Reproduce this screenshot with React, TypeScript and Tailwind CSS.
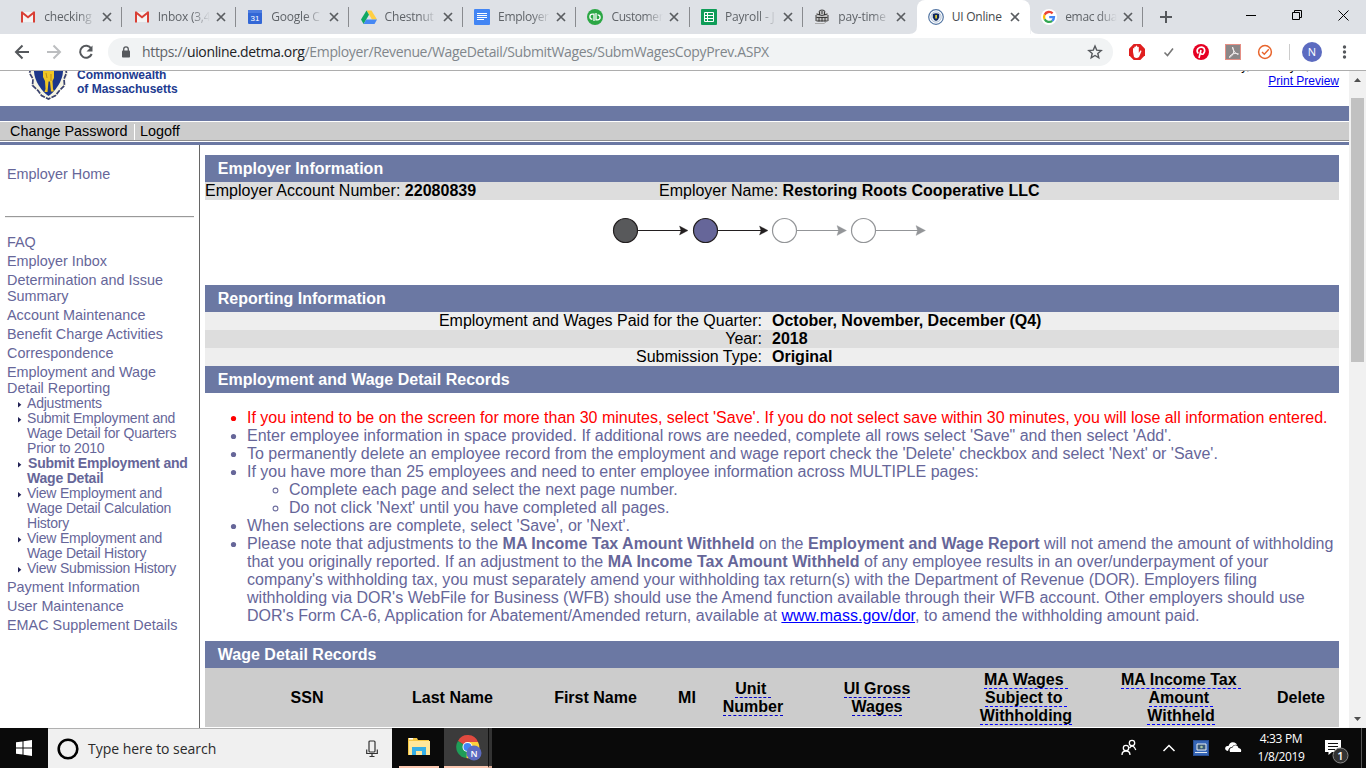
import React from "react";

const arial = "font-['Liberation_Sans',Arial,sans-serif]";
const ui = "font-['Open_Sans','Noto_Sans',sans-serif]";

function Gmail() {
  return (
    <svg width="16" height="16" viewBox="0 0 16 16">
      <path d="M2 3h12v10H2z" fill="#f3f3f3" />
      <path d="M1 13.5V3.2Q1 2.3 2.1 2.3L8 7l5.900-4.700q1.100 0 1.100.9v10.300h-2V5.600L8 9.600 3 5.600v7.900z" fill="#d93f35" />
    </svg>
  );
}
function Calendar() {
  return (
    <svg width="16" height="16" viewBox="0 0 16 16">
      <rect x="1" y="1" width="14" height="14" rx="1" fill="#3367d6" />
      <rect x="1" y="1" width="14" height="3" fill="#4e7de0" />
      <text x="8" y="11.7" fontSize="8" textAnchor="middle" fill="#fff" fontFamily="Liberation Sans">31</text>
    </svg>
  );
}
function Drive() {
  return (
    <svg width="16" height="16" viewBox="0 0 16 16">
      <path d="M5.5 1.5h5L16 10.5h-5z" fill="#ffcf43" />
      <path d="M5.5 1.5L0 10.5 2.6 15 8 5.8z" fill="#11a861" />
      <path d="M5.2 10.5H16L13.5 15H2.6z" fill="#4688f4" />
    </svg>
  );
}
function Docs() {
  return (
    <svg width="16" height="16" viewBox="0 0 16 16">
      <rect width="16" height="16" rx="1" fill="#4285f4" />
      <path d="M3 4.5h10M3 6.5h10M3 8.5h10M3 10.5h7" stroke="#fff" />
    </svg>
  );
}
function QuickBooks() {
  return (
    <svg width="16" height="16" viewBox="0 0 16 16">
      <circle cx="8" cy="8" r="8" fill="#2ca745" />
      <path d="M7 12V5.200H5.400a2.500 2.500 0 0 0 0 5M9 4v6.800h1.600a2.500 2.500 0 0 0 0-5" fill="none" stroke="#fff" strokeWidth="1.300" />
    </svg>
  );
}
function Sheets() {
  return (
    <svg width="16" height="16" viewBox="0 0 16 16">
      <rect width="16" height="16" rx="1" fill="#0f9d58" />
      <path d="M3.500 3.500h9v9h-9zM3.500 6.500h9M3.500 9.500h9M6.500 3.500v9" fill="none" stroke="#fff" />
    </svg>
  );
}
function Statehouse() {
  return (
    <svg width="16" height="16" viewBox="0 0 16 16">
      <path d="M2 6q0-2 3-3 0-2 3-2t3 2q3 1 3 3v6H2z" fill="#c4c4c4" />
      <path d="M5 3q0-2 3-2t3 2M2.500 5q5.500 3 11 0M2 12V6M14 12V6M5.500 3v3M10.500 3v3M8 2v3M2.500 8.500h11M5 9v3.500M8 8v4.500M11 9v3.500M2.500 12h11" stroke="#2b2b2b" fill="none" strokeWidth=".9" />
      <path d="M1 14.500h9l2-1.500" stroke="#aaa" fill="none" />
    </svg>
  );
}
function SealSmall() {
  return (
    <svg width="16" height="16" viewBox="0 0 16 16">
      <circle cx="8" cy="8" r="7.300" fill="#fff" stroke="#5577a4" strokeWidth="1.200" />
      <circle cx="8" cy="8" r="5.200" fill="#e8eef4" stroke="#9fb2ca" strokeWidth=".7" />
      <path d="M4.800 5Q8 3.500 11.200 5v3.500Q10.500 11 8 12 5.500 11 4.800 8.500z" fill="#10285e" />
      <path d="M7.200 6h1.800v3.500H7.200z" fill="#d9c62e" />
    </svg>
  );
}
function Google() {
  return (
    <svg width="16" height="16" viewBox="0 0 16 16">
      <circle cx="8" cy="8" r="8" fill="#fff" />
      <g fill="none" strokeWidth="2.300">
        <path d="M11.600 4.400A5 5 0 0 0 3.600 5.700" stroke="#ea4335" />
        <path d="M3.600 5.700a5 5 0 0 0 0 4.600" stroke="#fbbc05" />
        <path d="M3.600 10.300A5 5 0 0 0 11.200 11.800" stroke="#34a853" />
        <path d="M11.200 11.800A4.600 4.600 0 0 0 13 8.100H8.200" stroke="#4285f4" />
      </g>
    </svg>
  );
}
function Cross() {
  return (
    <svg width="10" height="10" viewBox="0 0 10 10">
      <path d="M1 1l8 8M9 1L1 9" stroke="#5a5d61" strokeWidth="1.700" />
    </svg>
  );
}

const tabs: { icon: React.ReactNode; label: string; track: string; active?: boolean }[] = [
  { icon: <Gmail />, label: "checking", track: "tracking-[-0.2px]" },
  { icon: <Gmail />, label: "Inbox (3,4", track: "tracking-[-0.25px]" },
  { icon: <Calendar />, label: "Google C", track: "tracking-[-0.2px]" },
  { icon: <Drive />, label: "Chestnut", track: "tracking-[-0.2px]" },
  { icon: <Docs />, label: "Employer", track: "tracking-[-0.3px]" },
  { icon: <QuickBooks />, label: "Customer", track: "tracking-[-0.4px]" },
  { icon: <Sheets />, label: "Payroll - J", track: "tracking-[-0.15px]" },
  { icon: <Statehouse />, label: "pay-time", track: "tracking-[-0.2px]" },
  { icon: <SealSmall />, label: "UI Online", track: "tracking-[-0.25px]", active: true },
  { icon: <Google />, label: "emac dua", track: "tracking-[-0.35px]" },
];

function TabStrip() {
  return (
    <div className="flex h-[34px] bg-[#dee1e6] pl-[9px]">
      {tabs.map((t, i) => (
        <div key={t.label} className={`relative flex h-[34px] w-[113.450px] shrink-0 items-center pl-[11.300px] ${t.active ? "rounded-t-lg bg-white" : ""}`}>
          {t.active && (
            <svg className="absolute bottom-0 -left-2" width="130" height="8" viewBox="0 0 130 8">
              <path d="M0 8Q8 8 8 0V8zM121.400 0Q121.400 8 129.400 8h-8z" fill="#fff" />
            </svg>
          )}
          <span className="flex w-4 shrink-0">{t.icon}</span>
          <span className={`relative ml-[8px] w-[52px] overflow-hidden text-[12px] leading-[18px] whitespace-nowrap ${t.track} ${t.active ? "text-[#45494d]" : "text-[#5f6368] [mask-image:linear-gradient(to_right,#000_65%,transparent)]"}`}>{t.label}</span>
          <span className="ml-[6px] flex"><Cross /></span>
          {i !== 7 && !t.active && <span className="absolute top-[7px] right-0 h-5 w-px bg-[#898b8f]" />}
        </div>
      ))}
      <div className="flex w-[45px] items-center justify-center">
        <svg width="12" height="12" viewBox="0 0 12 12"><path d="M6 0v12M0 6h12" stroke="#55585c" strokeWidth="2" /></svg>
      </div>
      <div className="ml-[57.500px] flex h-[29px] items-center">
        <svg width="110" height="14" viewBox="0 0 110 14" fill="none" stroke="#000">
          <path d="M0 7.500h10M46.500 4.500h7v7h-7zM48.500 4v-1.500h7v7h-1.500M92.500 2.500l10 10M102.500 2.500l-10 10" />
        </svg>
      </div>
    </div>
  );
}

function Toolbar() {
  return (
    <div className="flex h-[37px] items-center border-b border-[#adadad] bg-white">
      <svg width="108" height="36" viewBox="0 0 108 36" fill="none" strokeWidth="2">
        <path d="M29 18H16.500M22.500 11.500L16 18l6.500 6.500" stroke="#55585c" />
        <path d="M47 18h12.500M53.500 11.500L60 18l-6.500 6.500" stroke="#bcbec0" />
        <path d="M91.200 14.500A6 6 0 1 0 91.700 20" stroke="#55585c" />
        <path d="M92.500 11.500v6h-6z" fill="#55585c" />
      </svg>
      <div className="flex h-7 w-[1005px] items-center rounded-full bg-[#f1f3f4] pl-[13px]">
        <svg width="10" height="12" viewBox="0 0 10 12">
          <rect x="1" y="4.500" width="8" height="7" rx=".8" fill="#55585c" />
          <path d="M2.700 5V3.200a2.300 2.300 0 0 1 4.600 0V5" fill="none" stroke="#55585c" strokeWidth="1.300" />
        </svg>
        <span className="ml-[11px] w-[940px] text-[14px] leading-5 tracking-[-0.350px] whitespace-nowrap text-[#80868b]">
          <span className="text-[#5f6368]">https://</span><span className="text-[#202124]">uionline.detma.org</span>/Employer/Revenue/WageDetail/SubmitWages/SubmWagesCopyPrev.ASPX
        </span>
        <svg width="16" height="16" viewBox="0 0 16 16" className="ml-[5px] shrink-0">
          <path d="M8 2l1.700 4.100 4.500.4-3.400 2.900 1 4.400L8 11.500l-3.800 2.300 1-4.400-3.400-2.900 4.500-.4z" fill="none" stroke="#55585c" strokeWidth="1.400" />
        </svg>
      </div>
      <svg width="253" height="36" viewBox="1113 34 253 36">
        <path d="M1133.700 44h6.600l4.700 4.700v6.600l-4.700 4.700h-6.600l-4.700-4.700v-6.600z" fill="#e01f1f" />
        <path d="M1133 52v-3.500q.8-1 1.300 0V47q.9-1.200 1.500 0v-.8q.9-1.200 1.500 0v1q1-1.100 1.500 0V53l1.500-2.400q1.600-.2 1 1.200l-2.300 5.200q-2.500 2-5 0z" fill="#fff" />
        <path d="M1164.500 52.500l3 3 5.500-7" fill="none" stroke="#777" strokeWidth="1.600" />
        <circle cx="1201" cy="52" r="8" fill="#e60023" />
        <path d="M1201 50l-2 8M1198.300 53.500q-2.300-2.500-.3-5 3-2.500 6-.3 1.700 3-.7 5.700-2 .9-2.800-.8" fill="none" stroke="#fff" strokeWidth="1.600" />
        <rect x="1225.500" y="44.500" width="15" height="15" fill="#8b8788" stroke="#e58f85" />
        <path d="M1232.500 47q2 4 1 6-2 4-4 4.500-1-1 3-3.500 4-1.500 6 0 0 1.500-3-1-3-3-3-6" fill="none" stroke="#f3eeee" />
        <circle cx="1265" cy="52" r="6.400" fill="none" stroke="#e8642c" strokeWidth="1.500" />
        <path d="M1262 52l2.300 2.300 4.500-5" fill="none" stroke="#e8642c" strokeWidth="1.400" />
        <path d="M1289.500 44v16" stroke="#ccc" />
        <circle cx="1312" cy="52" r="10" fill="#5c6bc0" />
        <text x="1312" y="56" fontSize="11" textAnchor="middle" fill="#fff" fontFamily="Open Sans">N</text>
        <g fill="#55585c"><circle cx="1344.500" cy="47" r="1.700" /><circle cx="1344.500" cy="52" r="1.700" /><circle cx="1344.500" cy="57" r="1.700" /></g>
      </svg>
    </div>
  );
}

function SiteHeader() {
  return (
    <>
      <div className="flex h-[35px] justify-between overflow-hidden">
        <div className="flex">
          <svg width="77" height="35" viewBox="0 71 77 35">
            <path d="M30 66L29 73l3 6v7l5 5 3.500 5 8 4 8-4 3.500-5 5.500-5V80l2.500-6-1.500-8z" fill="#f6f4e3" />
            <path d="M31 68l-1.500 5 3.500 6-.5 6.500 5.500 5 3.500 5 7 3.500 7-3.500 4-5 5-5-.5-6.500 2.500-6-1-5" fill="none" stroke="#3a4270" strokeWidth="1.700" strokeDasharray="5 1.200" />
            <path d="M34 66h29q1 10-4.500 19-5 8-10 11-5-3-10-11Q33 76 34 66z" fill="#1d3789" />
            <path d="M43 71h11v7l-1.500 3 .5 8 1 2.500h-3l-1-10h-1.500l-1 10.500h-3l1-3-.5-8-2-4z" fill="#f2c624" />
            <path d="M46 73l1 5M51 74v7" stroke="#bd8b1b" />
          </svg>
          <div className="-mt-[3px] text-[12px] leading-[14px] font-bold text-[#213a8f]">Commonwealth<br />of Massachusetts</div>
        </div>
        <div className="-mt-[12px] mr-[10px] text-right text-[12px] leading-[15px]">
          <div>Tuesday, January 8, 2019</div>
          <a className="text-[#0000ee] underline">Print Preview</a>
        </div>
      </div>
      <div className="h-[15px] bg-[#6b78a3]" />
      <div className="mt-px flex h-[19px] items-center border-b border-[#8e8e8e] bg-[#ccc] pt-px pl-[10px] text-[14.400px]">
        <span>Change Password</span>
        <span className="mr-[5.500px] ml-[6px] h-4 w-px bg-white" />
        <span>Logoff</span>
      </div>
      <div className="mt-px h-[3px] bg-[#6b78a3]" />
    </>
  );
}

const subItems: { lines: string[]; bold?: boolean }[] = [
  { lines: ["Adjustments"] },
  { lines: ["Submit Employment and", "Wage Detail for Quarters", "Prior to 2010"] },
  { lines: ["Submit Employment and", "Wage Detail"], bold: true },
  { lines: ["View Employment and", "Wage Detail Calculation", "History"] },
  { lines: ["View Employment and", "Wage Detail History"] },
  { lines: ["View Submission History"] },
];

function Sidebar() {
  return (
    <nav className="h-[583px] w-[200px] shrink-0 border-r border-[#666] pt-[21px] pl-[7px] text-[14.400px] leading-4 whitespace-nowrap text-[#666699]">
      <div>Employer Home</div>
      <div className="mt-[34px] mr-[5px] -ml-[2px] h-[2px] border-t border-b border-t-[#999] border-b-[#eee]" />
      <div className="mt-4 flex flex-col gap-[3px]">
        <div>FAQ</div>
        <div>Employer Inbox</div>
        <div>Determination and Issue<br />Summary</div>
        <div>Account Maintenance</div>
        <div>Benefit Charge Activities</div>
        <div>Correspondence</div>
        <div>
          Employment and Wage<br />Detail Reporting
          <ul className="text-[14px] leading-[15px] tracking-[-0.210px]">
            {subItems.map((s, i) => (
              <li key={i} className={`flex ${s.bold ? "font-bold" : ""}`}>
                <svg width="20" height="15" viewBox="0 0 20 15"><path d="M11 6v5.500l3.300-2.750z" fill="#222255" /></svg>
                <span>{s.lines.map((l, j) => <span key={l} className={`block ${s.bold && j === 0 ? "pl-px" : ""}`}>{l}</span>)}</span>
              </li>
            ))}
          </ul>
        </div>
        <div>Payment Information</div>
        <div>User Maintenance</div>
        <div>EMAC Supplement Details</div>
      </div>
    </nav>
  );
}

function Heading({ children }: { children: React.ReactNode }) {
  return <h2 className="h-[27px] bg-[#6b78a3] pl-[12.800px] text-[16px] leading-[27px] font-bold text-white">{children}</h2>;
}

function Steps() {
  return (
    <svg className="mt-[17px] ml-[407px]" width="316" height="28" viewBox="612 217 316 28" strokeWidth="1.200">
      <g stroke="#231f20">
        <circle cx="625.500" cy="230.500" r="12" fill="#58595b" />
        <path d="M638 230.500h44M718 230.500h44" />
        <path d="M679.500 226l8.500 4.500-8.500 4.500 1.500-4.500zM759.500 226l8.500 4.500-8.500 4.500 1.500-4.500z" fill="#231f20" strokeWidth=".3" />
        <circle cx="705.500" cy="230.500" r="12" fill="#666699" />
      </g>
      <g stroke="#939598">
        <circle cx="784.500" cy="230.500" r="12" fill="#fff" />
        <circle cx="863.500" cy="230.500" r="12" fill="#fff" />
        <path d="M797 230.500h44M876 230.500h44" />
        <path d="M837 225.500l9.500 5-9.500 5 1.500-5zM916 225.500l9.500 5-9.500 5 1.500-5z" fill="#939598" strokeWidth=".3" />
      </g>
    </svg>
  );
}

function Item({ red, children }: { red?: boolean; children: React.ReactNode }) {
  return (
    <li className={`flex pl-[22px] ${red ? "text-[#ff0000]" : ""}`}>
      <svg className="shrink-0" width="20" height="18" viewBox="0 0 20 18"><circle cx="6.500" cy="9.500" r="2.600" fill={red ? "#f00" : "#666699"} /></svg>
      <div>{children}</div>
    </li>
  );
}
function SubItem({ children }: { children: React.ReactNode }) {
  return (
    <li className="flex pl-[67px]">
      <svg className="shrink-0" width="17" height="18" viewBox="0 0 17 18"><circle cx="3.500" cy="9.500" r="2.400" fill="none" stroke="#7070a0" strokeWidth="1.100" /></svg>
      <div>{children}</div>
    </li>
  );
}

const columns: { w: string; lines: string[]; style?: string }[] = [
  { w: "w-[144px]", lines: ["SSN"] },
  { w: "w-[147px]", lines: ["Last Name"] },
  { w: "w-[139px]", lines: ["First Name"] },
  { w: "w-[44px]", lines: ["MI"] },
  { w: "w-[88px]", lines: ["Unit ", "Number"], style: "border-[#0000cc]" },
  { w: "w-[160px]", lines: ["UI Gross", "Wages"], style: "border-[#0000cc]" },
  { w: "w-[138px]", lines: ["MA Wages ", "Subject to ", "Withholding"], style: "border-[#0000ff]" },
  { w: "w-[172px]", lines: ["MA Income Tax ", "Amount ", "Withheld"], style: "border-[#0000ff]" },
  { w: "w-[68px]", lines: ["Delete"] },
];

function Main() {
  return (
    <main className="ml-[5px] w-[1134px] shrink-0 pt-[10px] text-[16px] leading-[18px] whitespace-nowrap text-black">
      <Heading>Employer Information</Heading>
      <div className="flex h-[18px] bg-[#ddd]">
        <div className="w-[454px] tracking-[0.025px]">Employer Account Number: <b>22080839</b></div>
        <div>Employer Name: <b>Restoring Roots Cooperative LLC</b></div>
      </div>
      <div className="h-[85px] overflow-hidden"><Steps /></div>
      <Heading>Reporting Information</Heading>
      {[
        ["Employment and Wages Paid for the Quarter:", "October, November, December (Q4)"],
        ["Year:", "2018"],
        ["Submission Type:", "Original"],
      ].map(([k, v], i) => (
        <div key={k} className={`flex h-[18px] gap-[10px] ${i === 1 ? "bg-[#ddd]" : "bg-[#eee]"}`}>
          <div className="w-[557px] text-right">{k}</div><b>{v}</b>
        </div>
      ))}
      <Heading>Employment and Wage Detail Records</Heading>
      <ul className="h-[248px] pt-4 text-[#666699]">
        <Item red>If you intend to be on the screen for more than 30 minutes, select 'Save'. If you do not select save within 30 minutes, you will lose all information entered.</Item>
        <Item>Enter employee information in space provided. If additional rows are needed, complete all rows select 'Save" and then select 'Add'.</Item>
        <Item>To permanently delete an employee record from the employment and wage report check the 'Delete' checkbox and select 'Next' or 'Save'.</Item>
        <Item>If you have more than 25 employees and need to enter employee information across MULTIPLE pages:</Item>
        <SubItem>Complete each page and select the next page number.</SubItem>
        <SubItem>Do not click 'Next' until you have completed all pages.</SubItem>
        <Item>When selections are complete, select 'Save', or 'Next'.</Item>
        <Item>
          <span className="tracking-[0.008px]">Please note that adjustments to the <b>MA Income Tax Amount Withheld</b> on the <b>Employment and Wage Report</b> will not amend the amount of withholding<br />
          that you originally reported. If an adjustment to the <b>MA Income Tax Amount Withheld</b> of any employee results in an over/underpayment of your<br />
          company's withholding tax, you must separately amend your withholding tax return(s) with the Department of Revenue (DOR). Employers filing<br />
          withholding via DOR's WebFile for Business (WFB) should use the Amend function available through their WFB account. Other employers should use<br /></span>
          <span className="tracking-[0.018px]">DOR's Form CA-6, Application for Abatement/Amended return, available at <a className="text-[#0000ff] underline">www.mass.gov/dor</a>, to amend the withholding amount paid.</span>
        </Item>
      </ul>
      <Heading>Wage Detail Records</Heading>
      <div className="flex h-[59px] items-center bg-[#ccc] pl-[30px] font-bold">
        {columns.map((c) => (
          <div key={c.lines[0]} className={`flex shrink-0 flex-col items-center ${c.w}`}>
            {c.lines.map((l) => (
              <span key={l} className={`h-[18px] whitespace-pre ${c.style ? "border-b border-dashed " + c.style : ""}`}>{l}</span>
            ))}
          </div>
        ))}
      </div>
    </main>
  );
}

function Scrollbar() {
  return (
    <div className="flex w-[17px] shrink-0 flex-col items-center bg-[#f1f1f1]">
      <svg width="17" height="27" viewBox="0 0 17 27"><path d="M5 11h7l-3.500-4z" fill="#505050" /></svg>
      <div className="h-[264px] w-[13px] bg-[#c1c1c1]" />
      <svg className="mt-auto" width="17" height="17" viewBox="0 0 17 17"><path d="M5 6h7l-3.500 4z" fill="#505050" /></svg>
    </div>
  );
}

function Taskbar() {
  return (
    <div className={`flex h-10 bg-[#0a0a0a] ${ui}`}>
      <div className="flex w-12 items-center justify-center">
        <svg width="16" height="16" viewBox="0 0 16 16"><path d="M0 2.300L6.500 1.400V7.500H0zM7.500 1.200L16 0v7.500H7.500zM0 8.500h6.500v6.100L0 13.700zM7.500 8.500H16V16L7.500 14.800z" fill="#fff" /></svg>
      </div>
      <div className="flex w-[344px] items-center border-t border-[#b0b0b0] bg-[#f0f0f0] pl-[9px] text-[#2b2b2b]">
        <svg width="22" height="22" viewBox="0 0 22 22"><circle cx="11" cy="11" r="9.300" fill="none" stroke="#000" strokeWidth="2.600" /></svg>
        <span className="ml-[9px] w-[277px] text-[14px] tracking-[-0.03px]">Type here to search</span>
        <svg width="14" height="18" viewBox="0 0 14 18" fill="none" stroke="#333" strokeWidth="1.200"><rect x="4" y="1" width="6" height="11" rx="1" /><path d="M1.700 9.500v4h10.600v-4M7 13.500v3M4.500 16.500h5" /></svg>
      </div>
      <div className="ml-[7px] flex w-10 items-center justify-center border-b-2 border-[#fbc7b0] pb-[1px]">
        <svg width="22" height="19" viewBox="0 0 22 19">
          <path d="M0 1h9l1 2h11v15H0z" fill="#f5c743" /><path d="M1 4h21v14H1z" fill="#ffe79a" /><path d="M1 1h4v1.500H1z" fill="#fff" /><path d="M4 18v-8h14v8h-4v-4H8v4z" fill="#34aee6" />
        </svg>
      </div>
      <div className="ml-[5px] flex w-[45px] items-center justify-center border-r border-b-2 border-r-[#111] border-b-[#fbc7b0] bg-[#3b3b3b] pt-[2px] pl-[5px]">
        <svg width="26" height="26" viewBox="0 0 26 26">
          <path d="M11.500 12L2 6A11 11 0 0 1 22 7H11z" fill="#e04a3f" />
          <path d="M11.500 12L2 6a11 11 0 0 0 8.500 17l4-8z" fill="#1f9d58" />
          <path d="M11.500 7H22a11 11 0 0 1-11.500 16z" fill="#fdd13b" />
          <circle cx="11.500" cy="12" r="5" fill="#fff" /><circle cx="11.500" cy="12" r="4" fill="#4285f4" />
          <circle cx="18" cy="18" r="7.500" fill="#5c6bc0" />
          <text x="18" y="21.500" fontSize="9" textAnchor="middle" fill="#fff" fontWeight="600" fontFamily="Open Sans">N</text>
        </svg>
      </div>
      <div className="w-[3px] border-b-2 border-[#d9a893] bg-[#333]" />
      <svg className="ml-auto" width="130" height="40" viewBox="1116 728 130 40">
        <g fill="none" stroke="#fff" strokeWidth="1.300">
          <circle cx="1132" cy="743" r="2.700" /><path d="M1129.500 748q2.500-3.500 5-.5l1.300 2.500" />
          <circle cx="1126" cy="748" r="2.700" /><path d="M1122 755q0-4 4-4t4 4" />
          <path d="M1163.500 751l5.500-5.500 5.500 5.500" strokeWidth="1.500" />
        </g>
        <rect x="1193.500" y="740.500" width="15" height="15" fill="#3565b5" stroke="#274e93" />
        <path d="M1197 744h9v6h-9z" fill="#395978" stroke="#e8eef5" /><path d="M1195 752.500h12" stroke="#dfe8f0" /><circle cx="1201.500" cy="747" r="1.300" fill="#a7c6a1" />
        <path d="M1228 751q-4-1-2.500-4 1-1.500 3-1 1.500-5 6-3.500 2 .5 2.500 2.500-3-1-5 2-3 0-4 4z" fill="#fff" />
        <path d="M1230 752q-1.500-4 2.500-4.500 1.500-3.500 5-1.500l1 2q3.500.5 2.500 4z" fill="#fff" />
      </svg>
      <div className="flex w-[70px] flex-col justify-center text-center text-[12px] leading-[18px] tracking-[-0.350px] text-white"><span>4:33 PM</span><span>1/8/2019</span></div>
      <svg width="50" height="40" viewBox="1316 728 50 40">
        <path d="M1325 740h16v12h-9l-3.500 3v-3H1325z" fill="#fff" /><path d="M1328 743.500h10M1328 746.500h10M1328 749.500h7" stroke="#111" />
        <circle cx="1340.500" cy="755.500" r="7.500" fill="#333" stroke="#888" /><text x="1340.500" y="759.500" textAnchor="middle" fontSize="11" fontWeight="600" fill="#fff" fontFamily="Open Sans">1</text>
        <path d="M1361.500 728v40" stroke="#555" />
      </svg>
    </div>
  );
}

export default function App() {
  return (
    <div className="h-[768px] w-[1366px] overflow-hidden bg-white">
      <div className={ui}><TabStrip /><Toolbar /></div>
      <div className={`flex h-[657px] overflow-hidden ${arial}`}>
        <div className="w-[1349px] shrink-0 text-black">
          <SiteHeader />
          <div className="flex"><Sidebar /><Main /></div>
        </div>
        <Scrollbar />
      </div>
      <Taskbar />
    </div>
  );
}
